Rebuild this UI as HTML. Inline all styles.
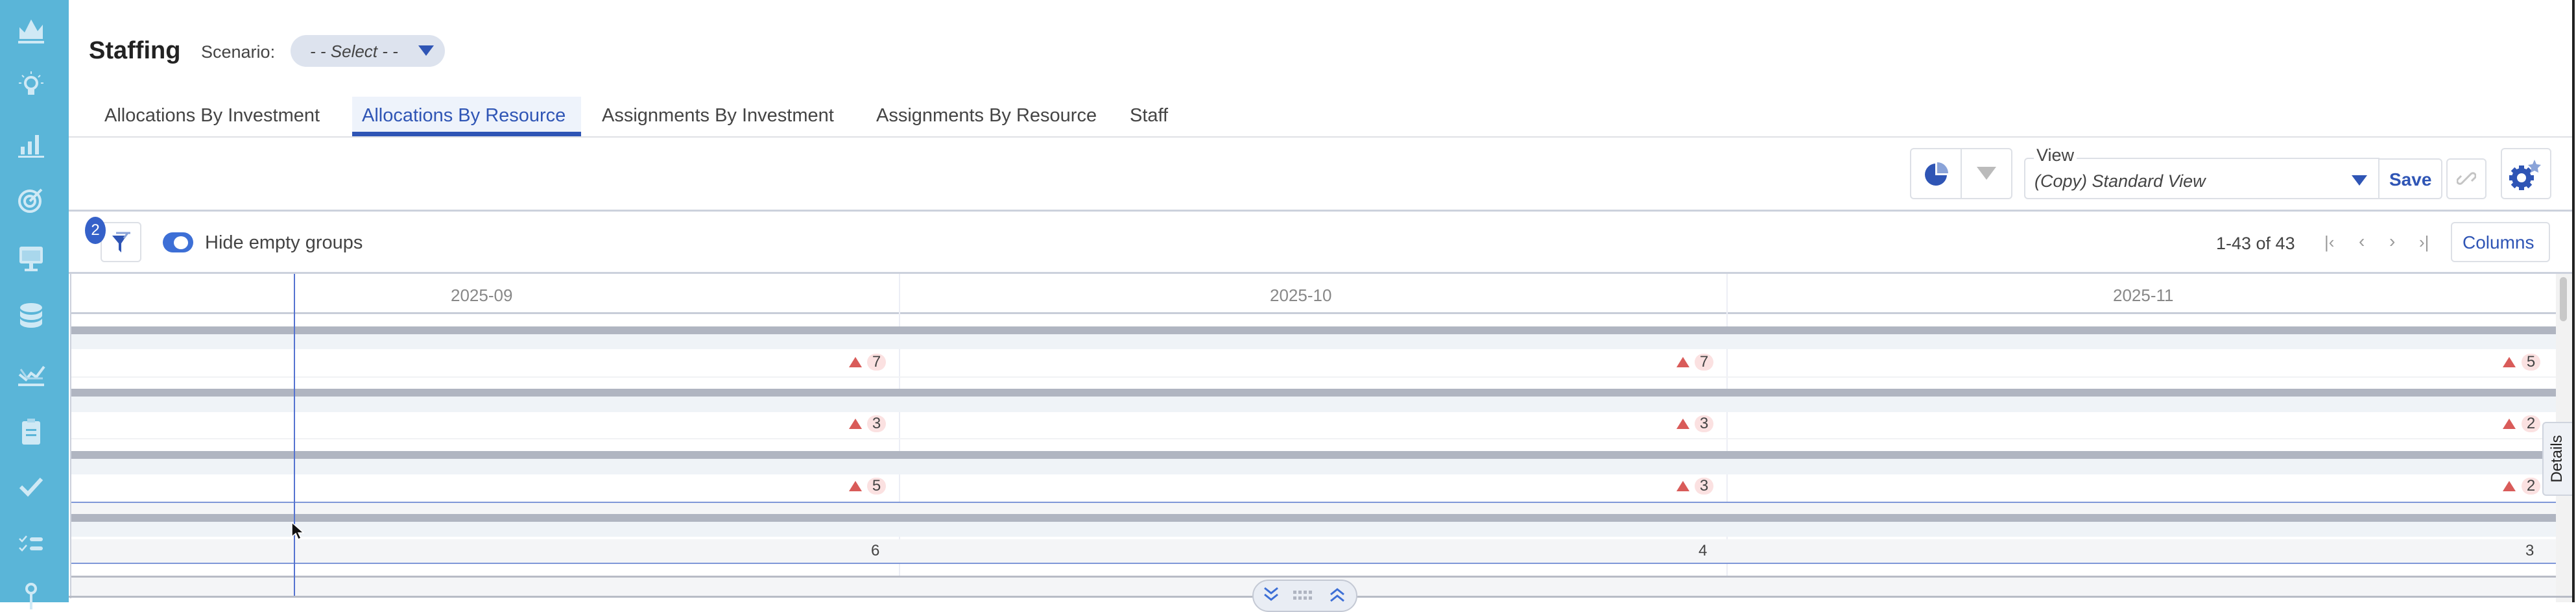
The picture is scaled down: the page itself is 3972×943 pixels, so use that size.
<!DOCTYPE html>
<html><head><meta charset="utf-8"><style>
*{box-sizing:border-box;margin:0;padding:0}
body{width:3972px;height:928px;overflow:hidden;background:#fff;font-family:"Liberation Sans",sans-serif;position:relative}
.a{position:absolute}
.t{color:#444;white-space:nowrap}
.ic{position:absolute;left:26px;width:44px;height:44px}
.bar{position:absolute;left:110px;width:3831px;height:12px;background:#b0b5c1}
.lt{position:absolute;left:110px;width:3831px;background:#eff3f7}
.hl{position:absolute;left:110px;width:3831px;height:2px;background:#f1f2f4}
.tri{position:absolute;width:0;height:0;border-left:10px solid transparent;border-right:10px solid transparent;border-bottom:16px solid #d95b59}
.cir{position:absolute;width:29px;height:26px;border-radius:13px;background:#fbe1e1;color:#444;font-size:24px;text-align:center;line-height:26px}
.btn{position:absolute;border:2px solid #dde0e6;border-radius:6px;background:#fff}
</style></head><body>
<div class="a" style="left:0;top:0;width:106px;height:928px;background:#5ab5d8"></div>
<svg class="ic" style="top:24px" viewBox="0 0 44 44"><path d="M4 36 L4 18 L12 26 L22 6 L32 24 L40 14 L40 36Z" fill="#cfe9f5"/><rect x="2" y="39" width="40" height="4" fill="#cfe9f5"/></svg>
<svg class="ic" style="top:108px" viewBox="0 0 44 44"><circle cx="22" cy="20" r="9" fill="none" stroke="#cfe9f5" stroke-width="4"/><rect x="17" y="30" width="10" height="8" fill="#cfe9f5"/><path d="M22 2v4M8 8l3 3M36 8l-3 3M3 20h4M37 20h4" stroke="#cfe9f5" stroke-width="2"/></svg>
<svg class="ic" style="top:200px" viewBox="0 0 44 44"><rect x="6" y="26" width="6" height="12" fill="#cfe9f5"/><rect x="17" y="18" width="6" height="20" fill="#cfe9f5"/><rect x="28" y="8" width="6" height="30" fill="#cfe9f5"/><rect x="2" y="40" width="40" height="3" fill="#cfe9f5"/></svg>
<svg class="ic" style="top:286px" viewBox="0 0 44 44"><circle cx="20" cy="24" r="16" fill="none" stroke="#cfe9f5" stroke-width="4"/><circle cx="20" cy="24" r="8" fill="none" stroke="#cfe9f5" stroke-width="4"/><path d="M20 24L38 6" stroke="#cfe9f5" stroke-width="4"/></svg>
<svg class="ic" style="top:376px" viewBox="0 0 44 44"><rect x="4" y="4" width="36" height="26" rx="3" fill="#cfe9f5"/><rect x="8" y="10" width="28" height="16" fill="#a9d7ec"/><rect x="19" y="30" width="6" height="8" fill="#cfe9f5"/><rect x="12" y="38" width="20" height="4" fill="#cfe9f5"/></svg>
<svg class="ic" style="top:465px" viewBox="0 0 44 44"><ellipse cx="22" cy="9" rx="17" ry="7" fill="#cfe9f5"/><path d="M5 14v7c0 4 8 7 17 7s17-3 17-7v-7c-3 4-10 6-17 6S8 18 5 14z" fill="#cfe9f5"/><path d="M5 26v7c0 4 8 7 17 7s17-3 17-7v-7c-3 4-10 6-17 6S8 30 5 26z" fill="#cfe9f5"/></svg>
<svg class="ic" style="top:553px" viewBox="0 0 44 44"><path d="M4 24l10 8 8-10 8 6 12-16" fill="none" stroke="#cfe9f5" stroke-width="4"/><path d="M6 16l10 14h24" fill="none" stroke="#a9d7ec" stroke-width="3"/><rect x="2" y="38" width="40" height="4" fill="#cfe9f5"/></svg>
<svg class="ic" style="top:643px" viewBox="0 0 44 44"><rect x="8" y="6" width="28" height="36" rx="3" fill="#cfe9f5"/><rect x="16" y="2" width="12" height="6" fill="#a9d7ec"/><rect x="14" y="18" width="16" height="3" fill="#5ab5d8"/><rect x="14" y="26" width="16" height="3" fill="#5ab5d8"/></svg>
<svg class="ic" style="top:728px" viewBox="0 0 44 44"><path d="M6 22l11 11L38 10" fill="none" stroke="#cfe9f5" stroke-width="6"/></svg>
<svg class="ic" style="top:818px" viewBox="0 0 44 44"><path d="M4 12l4 4 7-8M4 26l4 4 7-8" fill="none" stroke="#cfe9f5" stroke-width="2.5"/><rect x="20" y="10" width="20" height="6" rx="3" fill="#cfe9f5"/><rect x="20" y="24" width="20" height="6" rx="3" fill="#cfe9f5"/></svg>
<svg class="ic" style="top:895px" viewBox="0 0 44 44"><circle cx="22" cy="12" r="7" fill="none" stroke="#cfe9f5" stroke-width="4"/><rect x="20" y="19" width="4" height="25" fill="#cfe9f5"/></svg>
<div class="a" style="left:3966px;top:0;width:4px;height:928px;background:#222"></div>
<div class="a t" style="left:137px;top:57px;font-size:38px;font-weight:bold;color:#222">Staffing</div>
<div class="a t" style="left:310px;top:65px;font-size:27px">Scenario:</div>
<div class="a" style="left:448px;top:54px;width:238px;height:49px;border-radius:25px;background:#dde3ee"></div>
<div class="a t" style="left:478px;top:64px;font-size:26px;font-style:italic;color:#444">- - Select - -</div>
<svg class="a" style="left:645px;top:70px" width="24" height="16"><path d="M0 0h24L12 16z" fill="#2f55b5"/></svg>
<div class="a" style="left:543px;top:149px;width:353px;height:61px;background:#eef3fb"></div>
<div class="a" style="left:543px;top:203px;width:353px;height:7px;background:#2f55b5"></div>
<div class="a t" style="left:161px;top:162px;font-size:29px">Allocations By Investment</div>
<div class="a t" style="left:558px;top:162px;font-size:29px;color:#2f55b5">Allocations By Resource</div>
<div class="a t" style="left:928px;top:162px;font-size:29px">Assignments By Investment</div>
<div class="a t" style="left:1351px;top:162px;font-size:29px">Assignments By Resource</div>
<div class="a t" style="left:1742px;top:162px;font-size:29px">Staff</div>
<div class="a" style="left:106px;top:210px;width:3860px;height:2px;background:#dfe1e5"></div>
<div class="btn" style="left:2945px;top:228px;width:158px;height:79px"></div>
<div class="a" style="left:3023px;top:230px;width:2px;height:75px;background:#dde0e6"></div>
<svg class="a" style="left:2966px;top:248px" width="40" height="40" viewBox="0 0 40 40"><path d="M18 4 A17 17 0 1 0 36 22 L18 22Z" fill="#2f55b5"/><path d="M21 2 A17 17 0 0 1 38 19 L21 19Z" fill="#8aa3d8"/></svg>
<svg class="a" style="left:3048px;top:257px" width="30" height="20"><path d="M0 0h30L15 20z" fill="#bbb"/></svg>
<div class="a" style="left:3121px;top:243px;width:548px;height:64px;border:2px solid #dde0e6;border-radius:6px 0 0 6px"></div>
<div class="a t" style="left:3136px;top:224px;font-size:27px;background:#fff;padding:0 4px">View</div>
<div class="a t" style="left:3137px;top:264px;font-size:27px;font-style:italic">(Copy) Standard View</div>
<svg class="a" style="left:3626px;top:270px" width="24" height="16"><path d="M0 0h24L12 16z" fill="#2f55b5"/></svg>
<div class="a" style="left:3667px;top:244px;width:99px;height:63px;border:2px solid #dde0e6;border-radius:0 6px 6px 0"></div>
<div class="a t" style="left:3684px;top:261px;font-size:28px;font-weight:bold;color:#2f55b5">Save</div>
<div class="btn" style="left:3772px;top:244px;width:62px;height:63px"></div>
<svg class="a" style="left:3788px;top:260px" width="30" height="30" viewBox="0 0 30 30"><path d="M13 17l-5 5a4 4 0 0 1-6-6l5-5M17 13l5-5a4 4 0 0 1 6 6l-5 5M11 19l8-8" fill="none" stroke="#c4c4c4" stroke-width="3"/></svg>
<div class="btn" style="left:3856px;top:228px;width:78px;height:79px"></div>
<svg class="a" style="left:3868px;top:244px" width="52" height="50" viewBox="0 0 52 50"><g transform="translate(20 30)"><circle r="11" fill="none" stroke="#2f55b5" stroke-width="8"/><g fill="#2f55b5"><rect x="-4" y="-19" width="8" height="8"/><rect x="-4" y="11" width="8" height="8"/><rect x="-19" y="-4" width="8" height="8"/><rect x="11" y="-4" width="8" height="8"/><rect x="-4" y="-19" width="8" height="8" transform="rotate(45)"/><rect x="-4" y="11" width="8" height="8" transform="rotate(45)"/><rect x="-19" y="-4" width="8" height="8" transform="rotate(45)"/><rect x="11" y="-4" width="8" height="8" transform="rotate(45)"/></g></g><path d="M40 2l3 7 7 1-5 5 1 7-6-3-6 3 1-7-5-5 7-1z" fill="#8aa3d8"/></svg>
<div class="a" style="left:106px;top:323px;width:3860px;height:3px;background:#ccd1dc"></div>
<div class="btn" style="left:155px;top:342px;width:63px;height:62px"></div>
<svg class="a" style="left:171px;top:357px" width="32" height="34" viewBox="0 0 32 34"><path d="M2 6h22L16 18v14l-4-4V18z" fill="#2f55b5"/><path d="M8 2h22M26 2l-6 8" stroke="#8aa3d8" stroke-width="3" fill="none"/></svg>
<div class="a" style="left:131px;top:334px;width:32px;height:42px;border-radius:16px/21px;background:#3561c9;color:#fff;font-size:24px;text-align:center;line-height:42px">2</div>
<div class="a" style="left:251px;top:358px;width:47px;height:31px;border-radius:16px;background:#3d6fd6"></div>
<div class="a" style="left:268px;top:364px;width:22px;height:20px;border-radius:50%;background:#fff"></div>
<div class="a t" style="left:316px;top:358px;font-size:29px">Hide empty groups</div>
<div class="a t" style="left:3417px;top:360px;font-size:27px">1-43 of 43</div>
<div class="a t" style="left:3584px;top:358px;font-size:26px;color:#999">|&lsaquo;</div>
<div class="a t" style="left:3637px;top:356px;font-size:28px;color:#999">&lsaquo;</div>
<div class="a t" style="left:3684px;top:356px;font-size:28px;color:#999">&rsaquo;</div>
<div class="a t" style="left:3730px;top:358px;font-size:26px;color:#999">&rsaquo;|</div>
<div class="btn" style="left:3779px;top:342px;width:153px;height:62px"></div>
<div class="a t" style="left:3797px;top:358px;font-size:28px;color:#2f55b5">Columns</div>
<div class="a" style="left:106px;top:419px;width:3860px;height:3px;background:#ccd1dc"></div>
<div class="a" style="left:108px;top:422px;width:2px;height:500px;background:#ccd1dc"></div>
<div class="a t" style="left:695px;top:440px;font-size:26px;color:#888">2025-09</div>
<div class="a t" style="left:1958px;top:440px;font-size:26px;color:#888">2025-10</div>
<div class="a t" style="left:3258px;top:440px;font-size:26px;color:#888">2025-11</div>
<div class="a" style="left:110px;top:481px;width:3831px;height:3px;background:#c8cdd8"></div>
<div class="a" style="left:1386px;top:422px;width:2px;height:496px;background:#eceef5"></div>
<div class="a" style="left:2662px;top:422px;width:2px;height:496px;background:#eceef5"></div>
<div class="a" style="left:3941px;top:422px;width:25px;height:506px;background:#f2f2f2"></div>
<div class="a" style="left:3947px;top:427px;width:11px;height:68px;border-radius:6px;background:#c8c8c8"></div>
<div class="bar" style="top:503px"></div><div class="lt" style="top:515px;height:23px"></div><div class="hl" style="top:580px"></div>
<div class="bar" style="top:599px"></div><div class="lt" style="top:611px;height:24px"></div><div class="hl" style="top:675px"></div>
<div class="bar" style="top:695px"></div><div class="lt" style="top:707px;height:24px"></div>
<div class="a" style="left:110px;top:773px;width:3831px;height:2px;background:#7f97d8"></div>
<div class="a" style="left:110px;top:775px;width:3831px;height:17px;background:#f4f5f7"></div>
<div class="bar" style="top:792px"></div><div class="lt" style="top:804px;height:23px"></div>
<div class="a" style="left:110px;top:831px;width:3831px;height:36px;background:#f4f5f7"></div>
<div class="a" style="left:110px;top:867px;width:3831px;height:2px;background:#7f97d8"></div>
<div class="a" style="left:110px;top:887px;width:3831px;height:3px;background:#b8bcc6"></div>
<div class="a" style="left:110px;top:890px;width:3831px;height:28px;background:#f4f5f7"></div>
<div class="a" style="left:106px;top:918px;width:3860px;height:3px;background:#b8bcc6"></div>
<div class="a" style="left:453px;top:422px;width:2px;height:496px;background:#5573d0"></div>
<div class="tri" style="left:1309px;top:550px"></div><div class="cir" style="left:1337px;top:545px">7</div>
<div class="tri" style="left:1309px;top:645px"></div><div class="cir" style="left:1337px;top:640px">3</div>
<div class="tri" style="left:1309px;top:741px"></div><div class="cir" style="left:1337px;top:736px">5</div>
<div class="a t" style="left:1343px;top:835px;font-size:24px">6</div>
<div class="tri" style="left:2585px;top:550px"></div><div class="cir" style="left:2613px;top:545px">7</div>
<div class="tri" style="left:2585px;top:645px"></div><div class="cir" style="left:2613px;top:640px">3</div>
<div class="tri" style="left:2585px;top:741px"></div><div class="cir" style="left:2613px;top:736px">3</div>
<div class="a t" style="left:2619px;top:835px;font-size:24px">4</div>
<div class="tri" style="left:3859px;top:550px"></div><div class="cir" style="left:3888px;top:545px">5</div>
<div class="tri" style="left:3859px;top:645px"></div><div class="cir" style="left:3888px;top:640px">2</div>
<div class="tri" style="left:3859px;top:741px"></div><div class="cir" style="left:3888px;top:736px">2</div>
<div class="a t" style="left:3894px;top:835px;font-size:24px">3</div>
<div class="a" style="left:3920px;top:650px;width:46px;height:114px;background:#eef1f6;border:2px solid #cfd4de;border-right:none;border-radius:6px 0 0 6px"></div>
<div class="a t" style="left:3943px;top:707px;font-size:24px;color:#222;transform:translate(-50%,-50%) rotate(-90deg)">Details</div>
<div class="a" style="left:1931px;top:893px;width:162px;height:50px;border-radius:25px;background:#e9edf4;border:2px solid #c4c9d4"></div>
<svg class="a" style="left:1948px;top:904px" width="130" height="24" viewBox="0 0 130 24"><path d="M2 2l10 8 10-8M2 12l10 8 10-8" fill="none" stroke="#3d6fd6" stroke-width="3"/><g fill="#b0b5c1"><rect x="46" y="6" width="5" height="5"/><rect x="54" y="6" width="5" height="5"/><rect x="62" y="6" width="5" height="5"/><rect x="70" y="6" width="5" height="5"/><rect x="46" y="15" width="5" height="5"/><rect x="54" y="15" width="5" height="5"/><rect x="62" y="15" width="5" height="5"/><rect x="70" y="15" width="5" height="5"/></g><path d="M104 12l10-8 10 8M104 22l10-8 10 8" fill="none" stroke="#3d6fd6" stroke-width="3"/></svg>
<svg class="a" style="left:449px;top:804px" width="20" height="30" viewBox="0 0 20 30"><path d="M1 1v22l6-5 4 9 4-2-4-8h8z" fill="#111" stroke="#fff" stroke-width="1.5"/></svg>
</body></html>
